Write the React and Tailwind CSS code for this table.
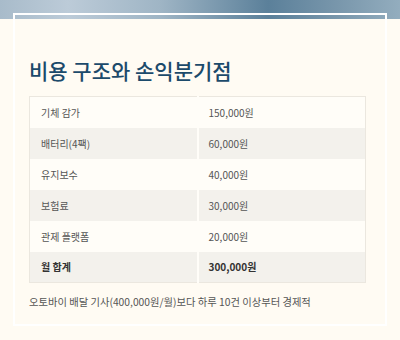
const rows = [
  { label: '기체 감가', value: '150,000원' },
  { label: '배터리(4팩)', value: '60,000원' },
  { label: '유지보수', value: '40,000원' },
  { label: '보험료', value: '30,000원' },
  { label: '관제 플랫폼', value: '20,000원' },
];

const App = () => {
  return (
    <div className="w-[400px] min-h-[340px] bg-[#fffbf3] font-['Noto_Sans_CJK_KR',sans-serif]">
      <div className="h-[19px] bg-[linear-gradient(90deg,#a8bbca_0%,#bccbd8_17%,#9fb5c5_40%,#5b809a_67%,#7896ab_84%,#93adbe_100%)]" />

      <div className="mx-[13px] -mt-[6px] border-2 border-white pl-[14px] pr-[19px] pt-[40px] pb-[14px]">
        <h2 className="text-[21px] leading-[30px] font-medium text-[#1c4a6b]">비용 구조와 손익분기점</h2>

        <table className="mt-[11px] w-[337px] border-collapse border border-[#ebe7df] text-[10px] text-[#555]">
          <tbody>
            {rows.map((r, i) => (
              <tr key={r.label} className={`h-[31px] ${i % 2 ? 'bg-[#f3f1ec]' : 'bg-[#fffdf8]'}`}>
                <td className="w-[168px] border-r-2 border-[#fffdf8] pl-[11px]">{r.label}</td>
                <td className="pl-[10px]">{r.value}</td>
              </tr>
            ))}
            <tr className="h-[31px] bg-[#f3f1ec] font-bold text-[#333]">
              <td className="w-[168px] border-r-2 border-[#fffdf8] pl-[11px]">월 합계</td>
              <td className="pl-[10px]">300,000원</td>
            </tr>
          </tbody>
        </table>

        <p className="mt-[11px] text-[10.3px] leading-[16px] text-[#555]">
          오토바이 배달 기사(400,000원/월)보다 하루 10건 이상부터 경제적
        </p>
      </div>
    </div>
  );
};

export default App;
